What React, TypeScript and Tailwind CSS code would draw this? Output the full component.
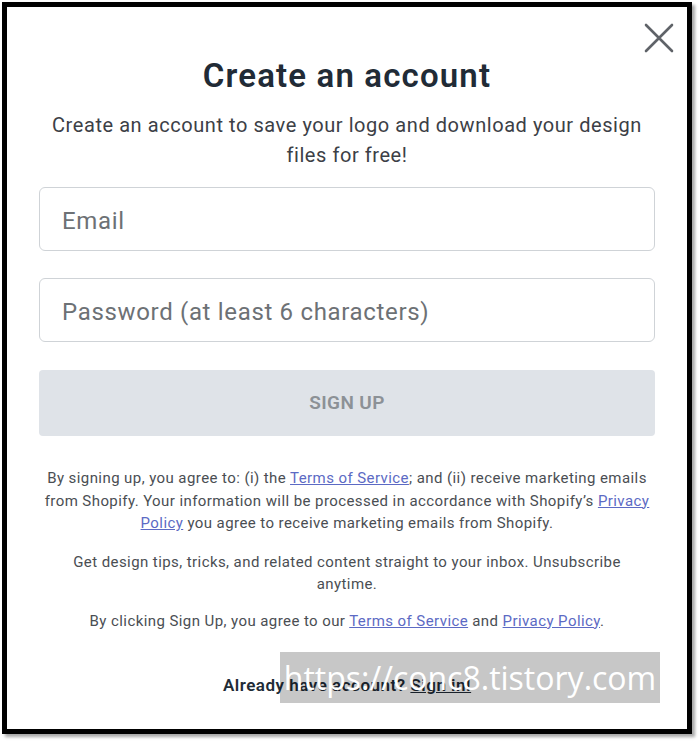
export default function App() {
  return (
    <div className="relative w-[700px] h-[743px] bg-white p-[2px] font-['Roboto',sans-serif]">
      <div className="relative w-[690px] h-[732px] border-[5px] border-black bg-white shadow-[3px_3px_3px_rgba(0,0,0,0.35)]">
        <button className="absolute right-[11px] top-[14px] w-[34px] h-[34px] flex items-center justify-center text-[#5f6368]">
          <svg width="32" height="32" viewBox="0 0 32 32" fill="none" stroke="currentColor" strokeWidth="2.6" strokeLinecap="round">
            <path d="M3 3L29 29M29 3L3 29" />
          </svg>
        </button>
        <div className="flex flex-col items-center px-[32px] pt-[49px]">
          <h1 className="text-[33px] leading-[40px] font-semibold tracking-[0.035em] text-[#212b36]">Create an account</h1>
          <p className="mt-[14px] text-[20px] leading-[30px] tracking-[0.028em] text-[#3c4046] text-center">
            Create an account to save your logo and download your design
            <br />
            files for free!
          </p>
          <input
            className="mt-[17px] w-[616px] h-[64px] rounded-[6px] border border-[#cfd3d7] pl-[22px] pt-[4px] text-[24px] tracking-[0.028em] outline-none placeholder:text-[#6d7175]"
            placeholder="Email"
          />
          <input
            className="mt-[27px] w-[616px] h-[64px] rounded-[6px] border border-[#cfd3d7] pl-[22px] pt-[4px] text-[24px] tracking-[0.028em] outline-none placeholder:text-[#6d7175]"
            placeholder="Password (at least 6 characters)"
          />
          <button className="mt-[28px] w-[616px] h-[66px] rounded-[4px] bg-[#dfe3e8] text-[19px] font-semibold tracking-[0.02em] text-[#8c9196]">
            SIGN UP
          </button>
          <div className="tracking-[0.028em] text-[15px] leading-[22.5px] text-[#4a4e53] text-center flex flex-col items-center">
            <p className="mt-[31px]">
              By signing up, you agree to: (i) the <a className="text-[#5c6ac4] underline">Terms of Service</a>; and (ii) receive marketing emails
              <br />
              from Shopify. Your information will be processed in accordance with Shopify’s <a className="text-[#5c6ac4] underline">Privacy</a>
              <br />
              <a className="text-[#5c6ac4] underline">Policy</a> you agree to receive marketing emails from Shopify.
            </p>
            <p className="mt-[16px]">
              Get design tips, tricks, and related content straight to your inbox. Unsubscribe
              <br />
              anytime.
            </p>
            <p className="mt-[14px]">
              By clicking Sign Up, you agree to our <a className="text-[#5c6ac4] underline">Terms of Service</a> and{" "}
              <a className="text-[#5c6ac4] underline">Privacy Policy</a>.
            </p>
          </div>
          <p className="mt-[41px] text-[17px] leading-[24px] font-semibold tracking-[0.03em] text-[#212b36]">
            Already have account? <a className="underline">Sign in!</a>
          </p>
        </div>
      </div>
      <div className="absolute left-[280px] top-[652px] w-[380px] h-[51px] bg-black/[0.22] flex items-center justify-center">
        <span className="text-[32px] text-white font-['Open_Sans',sans-serif]">https://conc8.tistory.com</span>
      </div>
    </div>
  );
}
